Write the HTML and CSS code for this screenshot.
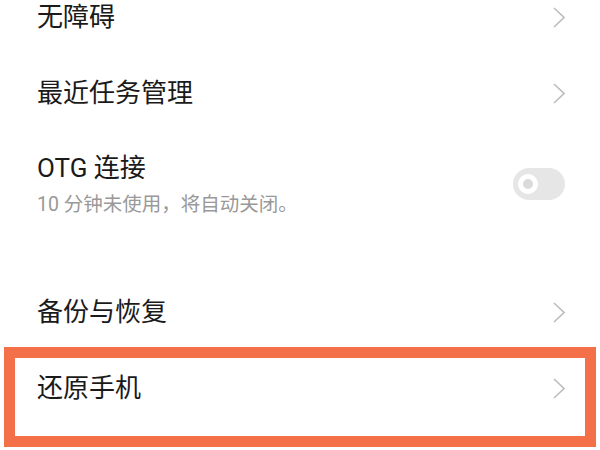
FILE: index.html
```html
<!DOCTYPE html>
<html lang="zh-CN">
<head>
	<meta charset="utf-8">
	<meta name="viewport" content="width=device-width, initial-scale=1.0">
	<title>更多设置</title>
	<link rel="stylesheet" href="styles.css">
</head>
<body>
<div class="wrap">
	<div class="list">
		<div class="row">
			<span class="title">无障碍</span>
			<svg class="arrow" width="12" height="21" viewBox="0 0 12 21"><path d="M1 1 L11 10.5 L1 20"/></svg>
		</div>
		<div class="row">
			<span class="title">最近任务管理</span>
			<svg class="arrow" width="12" height="21" viewBox="0 0 12 21"><path d="M1 1 L11 10.5 L1 20"/></svg>
		</div>
		<div class="row row_tall">
			<div class="text">
				<span class="title">OTG 连接</span>
				<span class="desc">10 分钟未使用，将自动关闭。</span>
			</div>
			<div class="switch"><i></i></div>
		</div>
	</div>
	<div class="list list_2">
		<div class="row">
			<span class="title">备份与恢复</span>
			<svg class="arrow" width="12" height="21" viewBox="0 0 12 21"><path d="M1 1 L11 10.5 L1 20"/></svg>
		</div>
		<div class="row">
			<span class="title">还原手机</span>
			<svg class="arrow" width="12" height="21" viewBox="0 0 12 21"><path d="M1 1 L11 10.5 L1 20"/></svg>
		</div>
	</div>
	<div class="mark"></div>
</div>
</body>
</html>
```

FILE: styles.css
```css
*	{margin:0;padding:0;box-sizing:border-box;}
html, body	{height:100%;overflow:hidden;background:#fff;}
body	{font-family:Roboto, "Noto Sans CJK SC", sans-serif;color:#1a1a1a;}
.wrap	{position:relative;display:flex;flex-direction:column;height:100%;}
.list	{display:flex;flex-direction:column;}
.list:first-child	{margin-top:-21px;}
.list_2	{margin-top:33px;}
.row	{display:flex;justify-content:space-between;align-items:center;flex-shrink:0;height:76px;padding:0 35px 0 37px;}
.row_tall	{height:110px;padding-bottom:4px;}
.row .text	{display:flex;flex-direction:column;gap:8px;}
.row .title	{font-size:26px;line-height:34px;}
.row .desc	{font-size:19.5px;line-height:24px;color:#999;}
.arrow	{display:block;}
.arrow path	{fill:none;stroke:#bdbdbd;stroke-width:1.6;}
.switch	{position:relative;width:52px;height:32px;border-radius:16px;background:#e6e6e6;}
.switch i	{position:absolute;left:5px;top:6px;width:20px;height:20px;border-radius:50%;border:5px solid #fff;background:#dadada;}
.mark	{position:absolute;left:4px;top:347px;width:592px;height:100px;border:11px solid #f47048;}
```
